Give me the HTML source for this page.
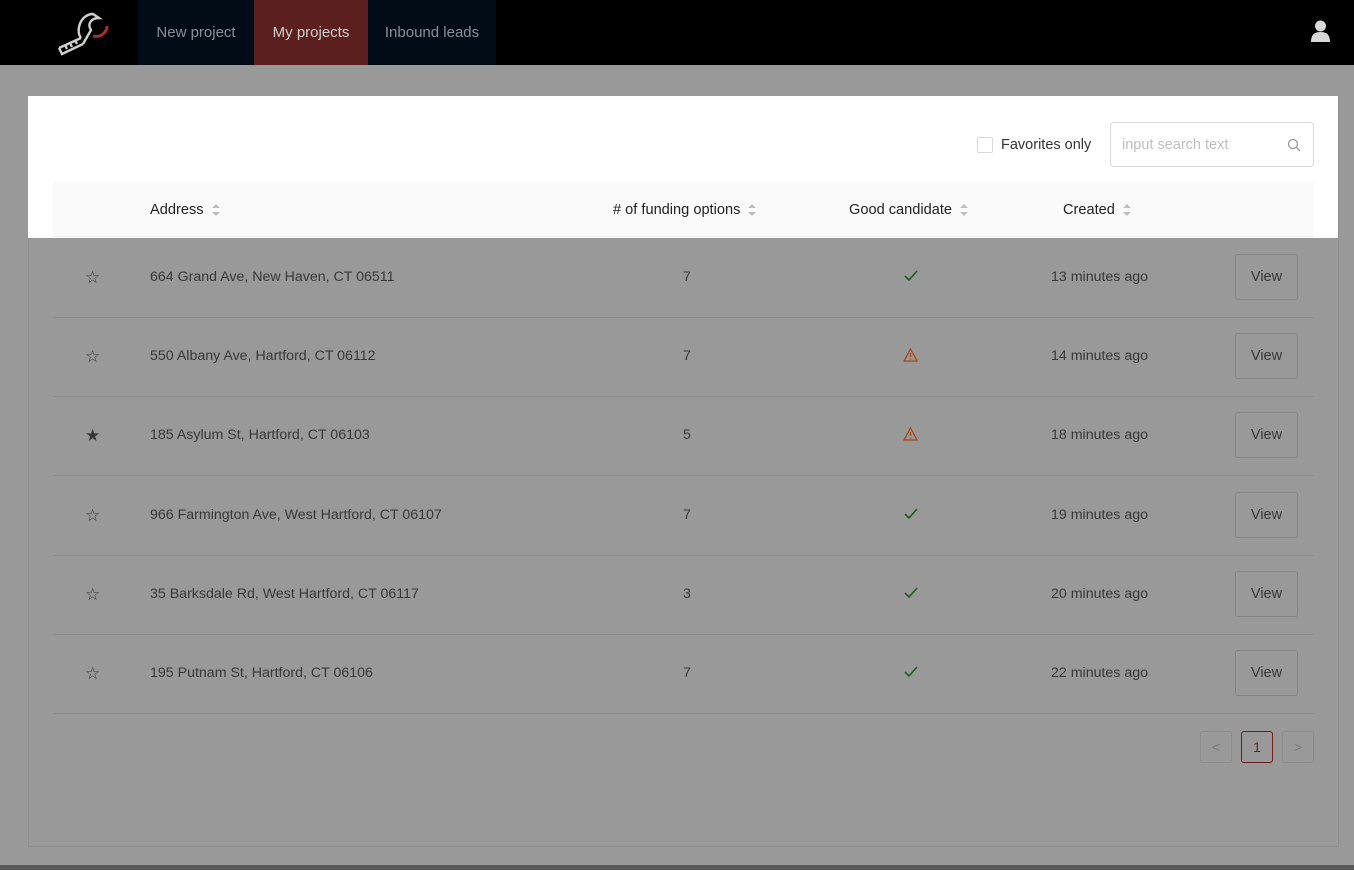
<!DOCTYPE html>
<html><head><meta charset="utf-8"><style>
*{margin:0;padding:0;box-sizing:border-box}
body{width:1354px;height:870px;background:#999;font-family:"Liberation Sans",sans-serif;position:relative;overflow:hidden}
.a{position:absolute}
.nav{left:0;top:0;width:1354px;height:65px;background:#000}
.ni{top:0;height:65px;line-height:65px;text-align:center;font-size:15px;color:#8a8f96}
.card{left:28px;top:96px;width:1311px;height:751px;border:1px solid #8e8e8e}
.white{left:28px;top:96px;width:1310px;height:142px;background:#fff}
.row{left:53px;width:1261px;height:80px;border-bottom:1px solid #8c8c8c;font-size:14.2px;color:#383838}
.row span{position:absolute;top:0;line-height:79px}
.btn{position:absolute;left:1182px;top:16px;width:63px;height:46px;border:1px solid #858585;border-radius:3px;text-align:center;line-height:45px;font-size:14.5px;color:#383838}
.th{top:202px;font-size:14.6px;color:#222}
.sort{display:inline-block;vertical-align:middle;margin-left:8px;width:8px}
.ok{position:absolute;left:851px;top:32px}
.wr{position:absolute;left:850px;top:31px}
</style></head><body>
<div class="a nav"></div>
<svg class="a" style="left:55px;top:10px" width="58" height="46" viewBox="0 0 58 46">
<path d="M4 38 L26 28 M4 38 L7 44 L28 34 M10 35 l2 4 M15 33 l2 4 M20 30 l2 4 M26 28 C20 20 26 4 38 4 L44 8 C36 8 32 14 36 20 L28 34" fill="none" stroke="#cfcfcf" stroke-width="2.4"/>
<path d="M38 26 C46 28 52 22 52 16" fill="none" stroke="#a63030" stroke-width="3"/>
</svg>
<div class="a ni" style="left:138px;width:116px;background:#020c17">New project</div>
<div class="a ni" style="left:254px;width:114px;background:#5c1f1f;color:#cfcfcf">My projects</div>
<div class="a ni" style="left:368px;width:128px;background:#020c17">Inbound leads</div>
<svg class="a" style="left:1310px;top:20px" width="21" height="22" viewBox="0 0 21 22"><circle cx="10.5" cy="6" r="5.5" fill="#d8d8d8"/><path d="M1 22 C1 14 5 12 10.5 12 C16 12 20 14 20 22Z" fill="#d8d8d8"/></svg>
<div class="a card"></div>
<div class="a white"></div>
<div class="a" style="left:977px;top:137px;width:16px;height:16px;border:1px solid #d9d9d9;border-radius:2px"></div>
<div class="a" style="left:1001px;top:137px;font-size:14.5px;color:#333">Favorites only</div>
<div class="a" style="left:1110px;top:122px;width:204px;height:45px;border:1px solid #d9d9d9;border-radius:4px"></div>
<div class="a" style="left:1122px;top:137px;font-size:14.5px;color:#bfbfbf">input search text</div>
<svg class="a" style="left:1287px;top:138px" width="14" height="14" viewBox="0 0 14 14"><circle cx="6" cy="6" r="4.5" fill="none" stroke="#999" stroke-width="1.3"/><path d="M9.3 9.3 L13 13" stroke="#999" stroke-width="1.3"/></svg>
<div class="a" style="left:53px;top:182px;width:1261px;height:55px;background:#fafafa;border-bottom:1px solid #f0f0f0"></div>
<div class="a th" style="left:150px">Address<svg class="sort" width="8" height="14" viewBox="0 0 8 14"><path d="M4 1 L8 5 H0Z M4 13 L8 9 H0Z" fill="#bfbfbf"/></svg></div>
<div class="a th" style="left:613px"># of funding options<svg class="sort" width="8" height="14" viewBox="0 0 8 14"><path d="M4 1 L8 5 H0Z M4 13 L8 9 H0Z" fill="#bfbfbf"/></svg></div>
<div class="a th" style="left:849px">Good candidate<svg class="sort" width="8" height="14" viewBox="0 0 8 14"><path d="M4 1 L8 5 H0Z M4 13 L8 9 H0Z" fill="#bfbfbf"/></svg></div>
<div class="a th" style="left:1063px">Created<svg class="sort" width="8" height="14" viewBox="0 0 8 14"><path d="M4 1 L8 5 H0Z M4 13 L8 9 H0Z" fill="#bfbfbf"/></svg></div>

<div class="a row" style="top:238px"><span style="left:32px;font-size:17px">☆</span><span style="left:97px">664 Grand Ave, New Haven, CT 06511</span><span style="left:630px">7</span><svg class="ok" width="14" height="12" viewBox="0 0 14 12"><path d="M1 6 L5 10 L13 1" fill="none" stroke="#1f5a1f" stroke-width="1.6"/></svg><span style="left:998px">13 minutes ago</span><div class="btn">View</div></div>
<div class="a row" style="top:317px"><span style="left:32px;font-size:17px">☆</span><span style="left:97px">550 Albany Ave, Hartford, CT 06112</span><span style="left:630px">7</span><svg class="wr" width="15" height="14" viewBox="0 0 15 14"><path d="M7.5 1 L14 13 H1Z" fill="none" stroke="#a24a1a" stroke-width="1.3"/><path d="M7.5 5 V9 M7.5 10.5 V11.5" stroke="#a24a1a" stroke-width="1.3"/></svg><span style="left:998px">14 minutes ago</span><div class="btn">View</div></div>
<div class="a row" style="top:396px"><span style="left:32px;font-size:17px">★</span><span style="left:97px">185 Asylum St, Hartford, CT 06103</span><span style="left:630px">5</span><svg class="wr" width="15" height="14" viewBox="0 0 15 14"><path d="M7.5 1 L14 13 H1Z" fill="none" stroke="#a24a1a" stroke-width="1.3"/><path d="M7.5 5 V9 M7.5 10.5 V11.5" stroke="#a24a1a" stroke-width="1.3"/></svg><span style="left:998px">18 minutes ago</span><div class="btn">View</div></div>
<div class="a row" style="top:476px"><span style="left:32px;font-size:17px">☆</span><span style="left:97px">966 Farmington Ave, West Hartford, CT 06107</span><span style="left:630px">7</span><svg class="ok" width="14" height="12" viewBox="0 0 14 12"><path d="M1 6 L5 10 L13 1" fill="none" stroke="#1f5a1f" stroke-width="1.6"/></svg><span style="left:998px">19 minutes ago</span><div class="btn">View</div></div>
<div class="a row" style="top:555px"><span style="left:32px;font-size:17px">☆</span><span style="left:97px">35 Barksdale Rd, West Hartford, CT 06117</span><span style="left:630px">3</span><svg class="ok" width="14" height="12" viewBox="0 0 14 12"><path d="M1 6 L5 10 L13 1" fill="none" stroke="#1f5a1f" stroke-width="1.6"/></svg><span style="left:998px">20 minutes ago</span><div class="btn">View</div></div>
<div class="a row" style="top:634px"><span style="left:32px;font-size:17px">☆</span><span style="left:97px">195 Putnam St, Hartford, CT 06106</span><span style="left:630px">7</span><svg class="ok" width="14" height="12" viewBox="0 0 14 12"><path d="M1 6 L5 10 L13 1" fill="none" stroke="#1f5a1f" stroke-width="1.6"/></svg><span style="left:998px">22 minutes ago</span><div class="btn">View</div></div>

<div class="a" style="left:1200px;top:731px;width:32px;height:32px;border:1px solid #8c8c8c;border-radius:3px;text-align:center;line-height:30px;color:#7a7a7a;font-size:14px">&lt;</div>
<div class="a" style="left:1241px;top:731px;width:32px;height:32px;border:1px solid #6e1f1f;border-radius:3px;text-align:center;line-height:30px;color:#6e1f1f;font-size:14px">1</div>
<div class="a" style="left:1282px;top:731px;width:32px;height:32px;border:1px solid #8c8c8c;border-radius:3px;text-align:center;line-height:30px;color:#7a7a7a;font-size:14px">&gt;</div>
<div class="a" style="left:0;top:865px;width:1354px;height:5px;background:#5a5a5a"></div>
</body></html>
